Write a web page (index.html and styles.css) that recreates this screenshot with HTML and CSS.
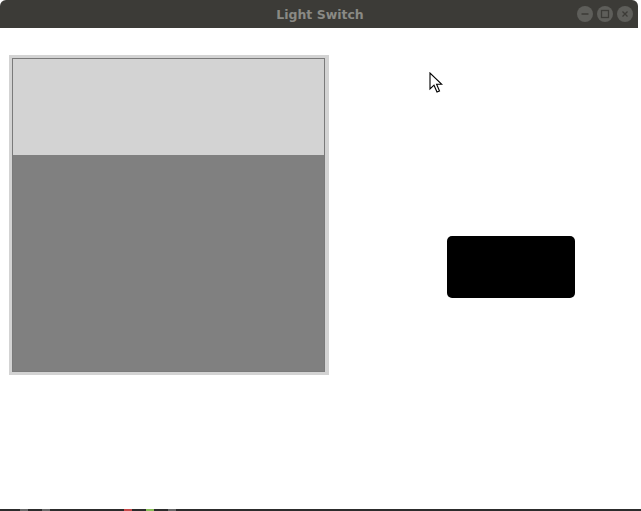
FILE: index.html
```html
<!DOCTYPE html>
<html>
<head>
<meta charset="utf-8">
<title>Light Switch</title>
<link rel="stylesheet" href="styles.css">
</head>
<body>
<div class="window">
  <div class="titlebar">
    <span class="title">Light Switch</span>
    <div class="controls">
      <span class="ctl"><svg width="16" height="16" viewBox="0 0 16 16"><line x1="4.5" y1="8" x2="11.5" y2="8" stroke="#3c3b37" stroke-width="1.5"/></svg></span>
      <span class="ctl"><svg width="16" height="16" viewBox="0 0 16 16"><rect x="4.5" y="4.5" width="7" height="7" fill="none" stroke="#3c3b37" stroke-width="1.3"/></svg></span>
      <span class="ctl"><svg width="16" height="16" viewBox="0 0 16 16"><path d="M5.5 5.5 L10.5 10.5 M10.5 5.5 L5.5 10.5" stroke="#3c3b37" stroke-width="1.3"/></svg></span>
    </div>
  </div>
  <div class="content">
    <div class="frame">
      <div class="meter">
        <div class="meter-top"></div>
        <div class="meter-bottom"></div>
      </div>
    </div>
    <div class="switch"></div>
    <svg class="cursor" width="14" height="22" viewBox="0 0 14 22"><path d="M1 1 L1 17 L5 13.2 L8 20 L10.5 19 L7.6 12.3 L12.8 12.3 Z" fill="#fff" stroke="#000" stroke-width="1.1" stroke-linejoin="miter"/></svg>
  </div>
  <div class="taskbar">
    <span class="tb tb1"></span><span class="tb tb2"></span><span class="tb tb3"></span><span class="tb tb4"></span><span class="tb tb5"></span>
  </div>
</div>
</body>
</html>
```
FILE: styles.css
```css
html, body {
  margin: 0;
  padding: 0;
  background: #ffffff;
  width: 641px;
  height: 511px;
  overflow: hidden;
}
.window {
  width: 641px;
  height: 511px;
  display: flex;
  flex-direction: column;
}
.titlebar {
  height: 28px;
  flex: none;
  background: #3c3b37;
  border-radius: 6px 6px 0 0;
  width: 638px;
  display: flex;
  align-items: center;
  justify-content: center;
  position: relative;
}
.title {
  font-family: "DejaVu Sans", sans-serif;
  font-weight: bold;
  font-size: 12.5px;
  color: #8a8a85;
  margin-left: 2px;
}
.controls {
  position: absolute;
  right: 5px;
  top: 6px;
  display: flex;
  gap: 4px;
}
.ctl {
  width: 16px;
  height: 16px;
  border-radius: 50%;
  background: #5e5e5a;
  display: block;
}
.ctl svg { display: block; }
.content {
  flex: 1;
  position: relative;
  display: flex;
  align-items: flex-start;
  padding: 27px 0 0 9px;
  width: 629px;
  border-right: 3px solid #ffffff;
}
.frame {
  width: 320px;
  height: 320px;
  background: #d3d3d3;
  padding: 3px 4px 3px 3px;
  box-sizing: border-box;
}
.meter {
  width: 100%;
  height: 100%;
  border: 1px solid #7a7a7a;
  box-sizing: border-box;
  display: flex;
  flex-direction: column;
}
.meter-top {
  height: 96px;
  background: #d3d3d3;
}
.meter-bottom {
  flex: 1;
  background: #808080;
}
.switch {
  width: 128px;
  height: 62px;
  background: #000000;
  border-radius: 5px;
  margin: 181px 0 0 118px;
}
.cursor {
  position: absolute;
  left: 429px;
  top: 44px;
}
.taskbar {
  height: 2px;
  flex: none;
  background: #2c2c2c;
  display: flex;
  gap: 14px;
  padding-left: 20px;
}
.tb { display: block; height: 2px; width: 8px; background: #6a6a6a; }
.tb3 { background: #c84a4a; margin-left: 60px; }
.tb4 { background: #8bbf5a; }
```
